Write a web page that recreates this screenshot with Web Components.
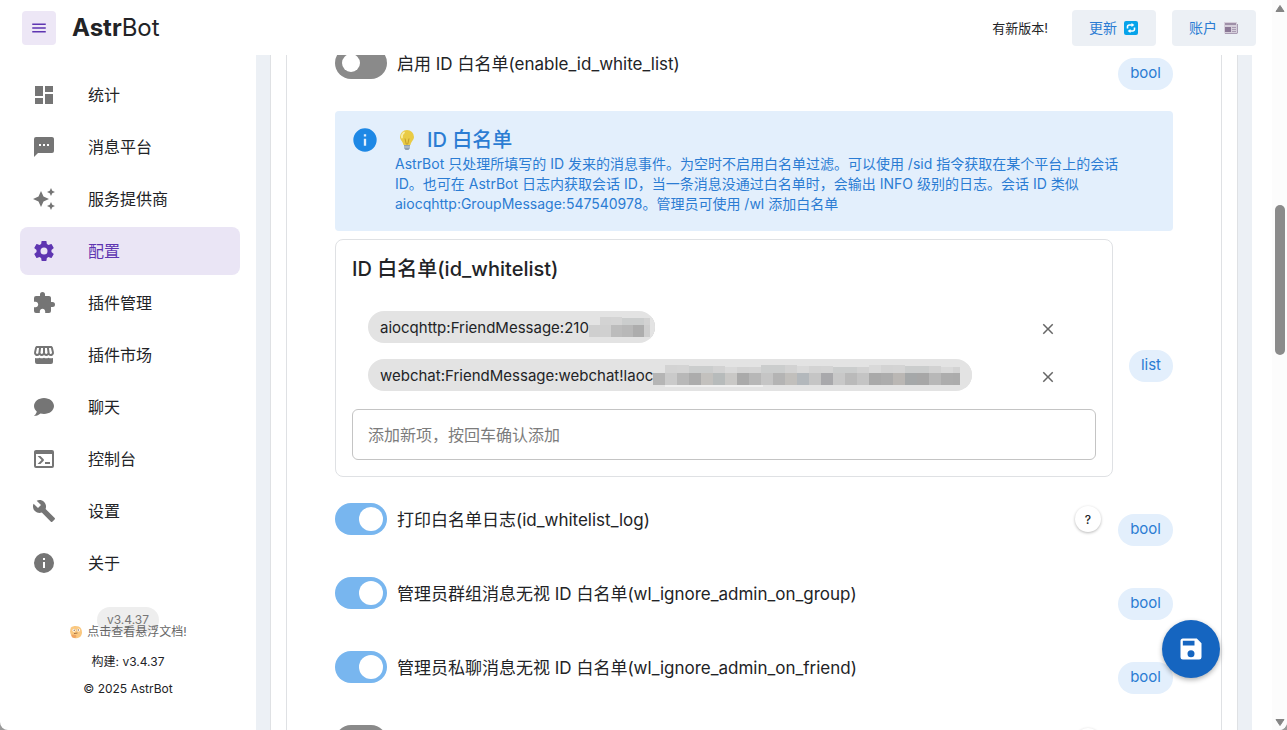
<!DOCTYPE html>
<html lang="zh-CN">
<head>
<meta charset="utf-8">
<meta name="viewport" content="width=device-width, initial-scale=1">
<title>AstrBot</title>
<style>
  :root {
    --ab-text: #222326;
    --ab-icon: #757575;
    --ab-purple: #5e35b1;
    --ab-purple-soft: #eae5f5;
    --ab-blue: #1e88e5;
    --ab-blue-text: #2b7cd3;
    --ab-blue-soft: #e3effc;
    --ab-surface: #ecf0f5;
    --ab-line: #dfe1e4;
  }
  html { background: #9a9a9a; }
  body {
    margin: 0;
    color: var(--ab-text);
    font-family: Inter, "Noto Sans CJK SC", sans-serif;
    font-size: 16px;
  }
</style>
</head>
<body>
<ab-app>
  <ab-header slot="header"></ab-header>

  <ab-sidebar slot="sidebar">
    <ab-nav-item icon="dashboard">统计</ab-nav-item>
    <ab-nav-item icon="message">消息平台</ab-nav-item>
    <ab-nav-item icon="creation">服务提供商</ab-nav-item>
    <ab-nav-item icon="cog" active>配置</ab-nav-item>
    <ab-nav-item icon="puzzle">插件管理</ab-nav-item>
    <ab-nav-item icon="store">插件市场</ab-nav-item>
    <ab-nav-item icon="chat">聊天</ab-nav-item>
    <ab-nav-item icon="console">控制台</ab-nav-item>
    <ab-nav-item icon="wrench">设置</ab-nav-item>
    <ab-nav-item icon="info">关于</ab-nav-item>
  </ab-sidebar>

  <ab-switch-row>启用 ID 白名单(enable_id_white_list)</ab-switch-row>
  <ab-tip>
    <span slot="title">ID 白名单</span>
    AstrBot 只处理所填写的 ID 发来的消息事件。为空时不启用白名单过滤。可以使用 /sid 指令获取在某个平台上的会话<br>
    ID。也可在 AstrBot 日志内获取会话 ID，当一条消息没通过白名单时，会输出 INFO 级别的日志。会话 ID 类似<br>
    aiocqhttp:GroupMessage:547540978。管理员可使用 /wl 添加白名单
  </ab-tip>
  <ab-list-editor>
    <span slot="title">ID 白名单(id_whitelist)</span>
    <ab-list-item>aiocqhttp:FriendMessage:210<ab-mosaic slot="mask" size="short"></ab-mosaic></ab-list-item>
    <ab-list-item>webchat:FriendMessage:webchat!laoc<ab-mosaic slot="mask" size="long"></ab-mosaic></ab-list-item>
  </ab-list-editor>
  <ab-switch-row checked help>打印白名单日志(id_whitelist_log)</ab-switch-row>
  <ab-switch-row checked>管理员群组消息无视 ID 白名单(wl_ignore_admin_on_group)</ab-switch-row>
  <ab-switch-row checked>管理员私聊消息无视 ID 白名单(wl_ignore_admin_on_friend)</ab-switch-row>
  <ab-switch-row help></ab-switch-row>

  <ab-save-button slot="fab"></ab-save-button>
</ab-app>

<script>
const ICONS = {
  menu: 'M3,6H21V8H3V6M3,11H21V13H3V11M3,16H21V18H3V16Z',
  dashboard: 'M13,3V9H21V3M13,21H21V11H13M3,21H11V15H3M3,13H11V3H3V13Z',
  message: 'M17,11H15V9H17M13,11H11V9H13M9,11H7V9H9M20,2H4A2,2 0 0,0 2,4V22L6,18H20A2,2 0 0,0 22,16V4C22,2.89 21.1,2 20,2Z',
  creation: 'M19,1L17.74,3.75L15,5L17.74,6.26L19,9L20.25,6.26L23,5L20.25,3.75M9,4L6.5,9.5L1,12L6.5,14.5L9,20L11.5,14.5L17,12L11.5,9.5M19,15L17.74,17.74L15,19L17.74,20.25L19,23L20.25,20.25L23,19L20.25,17.74',
  cog: 'M12,15.5A3.5,3.5 0 0,1 8.5,12A3.5,3.5 0 0,1 12,8.5A3.5,3.5 0 0,1 15.5,12A3.5,3.5 0 0,1 12,15.5M19.43,12.97C19.47,12.65 19.5,12.33 19.5,12C19.5,11.67 19.47,11.34 19.43,11L21.54,9.37C21.73,9.22 21.78,8.95 21.66,8.73L19.66,5.27C19.54,5.05 19.27,4.96 19.05,5.05L16.56,6.05C16.04,5.66 15.5,5.32 14.87,5.07L14.5,2.42C14.46,2.18 14.25,2 14,2H10C9.75,2 9.54,2.18 9.5,2.42L9.13,5.07C8.5,5.32 7.96,5.66 7.44,6.05L4.95,5.05C4.73,4.96 4.46,5.05 4.34,5.27L2.34,8.73C2.21,8.95 2.27,9.22 2.46,9.37L4.57,11C4.53,11.34 4.5,11.67 4.5,12C4.5,12.33 4.53,12.65 4.57,12.97L2.46,14.63C2.27,14.78 2.21,15.05 2.34,15.27L4.34,18.73C4.46,18.95 4.73,19.03 4.95,18.95L7.44,17.94C7.96,18.34 8.5,18.68 9.13,18.93L9.5,21.58C9.54,21.82 9.75,22 10,22H14C14.25,22 14.46,21.82 14.5,21.58L14.87,18.93C15.5,18.67 16.04,18.34 16.56,17.94L19.05,18.95C19.27,19.03 19.54,18.95 19.66,18.73L21.66,15.27C21.78,15.05 21.73,14.78 21.54,14.63L19.43,12.97Z',
  puzzle: 'M20.5,11H19V7C19,5.89 18.1,5 17,5H13V3.5A2.5,2.5 0 0,0 10.5,1A2.5,2.5 0 0,0 8,3.5V5H4A2,2 0 0,0 2,7V10.8H3.5C5,10.8 6.2,12 6.2,13.5C6.2,15 5,16.2 3.5,16.2H2V20A2,2 0 0,0 4,22H7.8V20.5C7.8,19 9,17.8 10.5,17.8C12,17.8 13.2,19 13.2,20.5V22H17A2,2 0 0,0 19,20V16H20.5A2.5,2.5 0 0,0 23,13.5A2.5,2.5 0 0,0 20.5,11Z',
  store: 'M5.06,3C4.63,3 4.22,3.14 3.84,3.42C3.46,3.7 3.24,4.06 3.14,4.5L2.11,8.91C1.86,10 2.06,10.92 2.69,11.73C3.3,12.5 4.2,13 5.22,13C6.16,13 6.91,12.59 7.47,12.05C8.1,12.67 8.86,13 9.8,13C10.64,13 11.44,12.63 12,12.07C12.68,12.7 13.45,13 14.3,13C15.17,13 15.91,12.67 16.54,12.05C17.11,12.62 17.86,13 18.81,13C19.8,13 20.7,12.5 21.28,11.77C21.94,10.95 22.14,10 21.89,8.91L20.86,4.5C20.73,4.06 20.5,3.7 20.13,3.42C19.77,3.14 19.38,3 18.94,3H5.06M18.89,4.97L19.97,9.38C20.06,9.81 19.97,10.2 19.69,10.55C19.44,10.86 19.13,11 18.75,11C18.44,11 18.17,10.9 17.95,10.66C17.73,10.43 17.61,10.16 17.58,9.84L16.97,5L18.89,4.97M5.06,5H7.03L6.42,9.84C6.3,10.63 5.91,11 5.25,11C4.84,11 4.53,10.86 4.31,10.55C4.03,10.2 3.94,9.81 4.03,9.38L5.06,5M9.05,5H11V9.7C11,10.05 10.89,10.35 10.64,10.62C10.39,10.88 10.08,11 9.7,11C9.36,11 9.07,10.88 8.84,10.59C8.61,10.3 8.5,10 8.5,9.66V9.5L9.05,5M13,5H14.95L15.5,9.5C15.58,9.92 15.5,10.27 15.21,10.57C14.95,10.87 14.61,11 14.2,11C13.89,11 13.61,10.88 13.36,10.62C13.11,10.35 13,10.05 13,9.7V5M3,14.9V19A2,2 0 0,0 5,21H19A2,2 0 0,0 21,19V14.9C20.3,15.2 19.6,15.3 18.8,15.3C18,15.3 17.2,15.1 16.5,14.7C15.2,15.5 13.3,15.5 12,14.7C10.7,15.5 8.8,15.5 7.5,14.7C6.2,15.5 4.4,15.5 3,14.9Z',
  chat: 'M12,3C17.5,3 22,6.58 22,11C22,15.42 17.5,19 12,19C10.76,19 9.57,18.82 8.47,18.5C5.55,21 2,21 2,21C4.33,18.67 4.7,17.1 4.75,16.5C3.05,15.07 2,13.13 2,11C2,6.58 6.5,3 12,3Z',
  console: 'M20,19V7H4V19H20M20,3A2,2 0 0,1 22,5V19A2,2 0 0,1 20,21H4A2,2 0 0,1 2,19V5C2,3.89 2.9,3 4,3H20M13,17V15H18V17H13M9.58,13L5.57,9H8.4L11.7,12.3C12.09,12.69 12.09,13.33 11.7,13.72L8.42,17H5.59L9.58,13Z',
  wrench: 'M22.7,19L13.6,9.9C14.5,7.6 14,4.9 12.1,3C10.1,1 7.1,0.6 4.7,1.7L9,6L6,9L1.6,4.7C0.4,7.1 0.9,10.1 2.9,12.1C4.8,14 7.5,14.5 9.8,13.6L18.9,22.7C19.3,23.1 19.9,23.1 20.3,22.7L22.6,20.4C23.1,20 23.1,19.3 22.7,19Z',
  info: 'M13,9H11V7H13M13,17H11V11H13M12,2A10,10 0 0,0 2,12A10,10 0 0,0 12,22A10,10 0 0,0 22,12A10,10 0 0,0 12,2Z',
  save: 'M15,9H5V5H15M12,19A3,3 0 0,1 9,16A3,3 0 0,1 12,13A3,3 0 0,1 15,16A3,3 0 0,1 12,19M17,3H5C3.89,3 3,3.9 3,5V19A2,2 0 0,0 5,21H19A2,2 0 0,0 21,19V7L17,3Z',
  close: 'M19,6.41L17.59,5L12,10.59L6.41,5L5,6.41L10.59,12L5,17.59L6.41,19L12,13.41L17.59,19L19,17.59L13.41,12L19,6.41Z',
};

const icon = (name, size = 24) =>
  `<svg viewBox="0 0 24 24" width="${size}" height="${size}" fill="currentColor" aria-hidden="true"><path d="${ICONS[name]}"/></svg>`;

// Multi-colour pictograms
const EMOJI = {
  refresh: `<svg viewBox="0 0 16 16" width="16" height="16" aria-hidden="true">
    <rect x="1" y="1" width="14" height="14" rx="2" fill="#06a3ea"/>
    <path d="M4.5 8.5V6.8A1.8 1.8 0 0 1 6.3 5H9M11.5 7.5v1.7A1.8 1.8 0 0 1 9.7 11H7" fill="none" stroke="#fff" stroke-width="1.6"/>
    <path d="M8.5 2.9 11.4 5 8.5 7.1ZM7.5 8.9 4.6 11l2.9 2.1Z" fill="#fff"/></svg>`,
  newspaper: `<svg viewBox="0 0 16 16" width="16" height="16" aria-hidden="true">
    <path d="M1 2h13v2h1v10H3a2 2 0 0 1-2-2Z" fill="#d6cfdb"/>
    <path d="M2 4h11" stroke="#877592" stroke-width="1.4"/>
    <rect x="2" y="7" width="6" height="5" fill="#8b7896"/>
    <path d="M9 7.5h4M9 9.5h4M9 11.5h4M2 13.5h12M14.5 4v9" stroke="#a99cb3"/></svg>`,
  bulb: `<svg viewBox="0 0 24 24" width="24" height="24" aria-hidden="true">
    <path d="M12 2a7 7 0 0 0-7 7c0 3 3 4.500 3.500 8h7C16 13.500 19 12 19 9a7 7 0 0 0-7-7Z" fill="#e9cb45"/>
    <path d="M9 4.500a5 5 0 0 0-2 5" fill="none" stroke="#f8eda2" stroke-width="1.800" stroke-linecap="round"/>
    <path d="M10 10.500 11.200 16h1.600L14 10.500" fill="none" stroke="#c39d28"/>
    <path d="M9 17h6v3l-1.500 2h-3L9 20Z" fill="#8fa0b1"/><path d="M9 19h6" stroke="#c7d0da"/></svg>`,
  face: `<svg viewBox="0 0 14 14" width="14" height="14" aria-hidden="true">
    <path d="M2 2.500C4 .6 10 .2 12 3.500s1.300 9-4.500 9.800C2 13.500-.3 7 2 2.500Z" fill="#fac880"/>
    <circle cx="5" cy="5.200" r="1.500" fill="#fff"/><circle cx="9.500" cy="5" r="1.500" fill="#fff"/>
    <circle cx="5.200" cy="5.200" r=".7" fill="#86633f"/><circle cx="9.300" cy="5" r=".7" fill="#86633f"/>
    <path d="M5 8.600 8.500 8" stroke="#a87545"/><path d="M2.500 9.500 6.500 10c1.500.3 1 3-1 3S2 12 2.500 9.500Z" fill="#f0a562"/></svg>`,
};

class AbElement extends HTMLElement {
  constructor() {
    super();
    this.attachShadow({ mode: 'open' });
  }
  connectedCallback() {
    this.shadowRoot.innerHTML = `<style>* { box-sizing: border-box; } svg { display: block; flex: none; } ${this.css()}</style>${this.html()}`;
  }
}

class AbApp extends AbElement {
  css() {
    return `
      :host {
        position: relative;
        display: grid;
        grid-template-columns: minmax(0, 1fr) 15px;
        height: 100vh;
        overflow: hidden;
        background: #fff;
        border-radius: 0 0 8px 8px;
      }
      .page { display: flex; flex-direction: column; min-height: 0; }
      .body { display: flex; flex: 1; min-height: 0; }
      .surface {
        display: flex;
        flex: 1;
        min-width: 0;
        margin-right: 20px;
        padding: 0 14px;
        background: var(--ab-surface);
        overflow: hidden;
      }
      .panel {
        flex: 1;
        min-width: 0;
        padding: 0 15px;
        background: #fff;
        border: solid var(--ab-line);
        border-width: 0 1px;
      }
      main {
        display: flex;
        flex-direction: column;
        margin-top: -29px;
        padding: 0 48px;
        border: solid var(--ab-line);
        border-width: 0 1px;
      }`;
  }
  html() {
    return `
      <div class="page">
        <slot name="header"></slot>
        <div class="body">
          <slot name="sidebar"></slot>
          <div class="surface"><div class="panel"><main><slot></slot></main></div></div>
        </div>
      </div>
      <ab-scroll-rail></ab-scroll-rail>
      <slot name="fab"></slot>`;
  }
}

class AbScrollRail extends AbElement {
  css() {
    return `
      :host {
        display: flex;
        flex-direction: column;
        align-items: center;
        padding: 4px 0 3px;
        background: #fcfcfc;
        color: #858585;
      }
      .track { flex: 1; padding-top: 192px; }
      .thumb { width: 10px; height: 150px; border-radius: 5px; background: #8b8b8b; }`;
  }
  html() {
    return `
      <svg width="10" height="9" viewBox="0 0 10 9" fill="currentColor"><path d="M5 1.500 9 7.500H1Z" stroke="currentColor" stroke-linejoin="round"/></svg>
      <div class="track"><div class="thumb"></div></div>
      <svg width="10" height="9" viewBox="0 0 10 9" fill="currentColor"><path d="M5 7.500 9 1.500H1Z" stroke="currentColor" stroke-linejoin="round"/></svg>`;
  }
}

class AbHeader extends AbElement {
  css() {
    return `
      :host {
        display: flex;
        align-items: center;
        flex: none;
        height: 55px;
        padding: 0 16px 0 22px;
        background: #fff;
      }
      button { border: 0; font: inherit; cursor: pointer; }
      .menu {
        display: grid;
        place-items: center;
        width: 34px;
        height: 34px;
        padding: 0;
        border-radius: 4px;
        background: #ede7f6;
        color: var(--ab-purple);
      }
      .logo {
        flex: 1;
        margin-left: 16px;
        color: inherit;
        font-size: 24px;
        text-decoration: none;
      }
      .notice { font-size: 13px; }
      .action {
        display: flex;
        align-items: center;
        justify-content: center;
        gap: 6px;
        min-width: 84px;
        height: 36px;
        padding: 0 16px;
        border-radius: 4px;
        background: var(--ab-surface);
        color: var(--ab-blue-text);
        font-size: 14px;
      }
      .action span { padding-bottom: 2px; }
      .actions { display: flex; gap: 16px; margin-left: 24px; }`;
  }
  html() {
    return `
      <button class="menu" aria-label="菜单">${icon('menu', 18)}</button>
      <a class="logo" href="#"><b>Astr</b>Bot</a>
      <span class="notice">有新版本!</span>
      <div class="actions">
        <button class="action"><span>更新</span>${EMOJI.refresh}</button>
        <button class="action"><span>账户</span>${EMOJI.newspaper}</button>
      </div>`;
  }
}

class AbSidebar extends AbElement {
  css() {
    return `
      :host { display: block; flex: none; width: 256px; padding: 16px 16px 0 20px; box-sizing: border-box; }
      nav { display: flex; flex-direction: column; gap: 4px; }
      footer {
        display: flex;
        flex-direction: column;
        align-items: center;
        padding: 20px 4px 0 0;
        font-size: 12px;
        line-height: 27px;
      }
      .version {
        height: 26px;
        margin-bottom: -9px;
        padding: 0 10px;
        border-radius: 13px;
        background: #eee;
        color: #777;
        line-height: 26px;
      }
      .docs {
        display: flex;
        align-items: center;
        gap: 4px;
        margin-bottom: 8px;
        color: #666;
        line-height: 16px;
        text-decoration: none;
      }`;
  }
  html() {
    return `
      <nav><slot></slot></nav>
      <footer>
        <span class="version">v3.4.37</span>
        <a class="docs" href="#">${EMOJI.face} 点击查看悬浮文档!</a>
        <span>构建: v3.4.37</span>
        <span>© 2025 AstrBot</span>
      </footer>`;
  }
}

class AbNavItem extends AbElement {
  css() {
    return `
      :host { display: block; }
      a {
        display: flex;
        align-items: center;
        gap: 32px;
        height: 48px;
        padding: 0 12px;
        border-radius: 8px;
        color: inherit;
        text-decoration: none;
      }
      span { padding-bottom: 3px; }
      svg { color: var(--ab-icon); }
      :host([active]) a { background: var(--ab-purple-soft); color: var(--ab-purple); }
      :host([active]) svg { color: inherit; }`;
  }
  html() {
    const current = this.hasAttribute('active') ? 'aria-current="page"' : '';
    return `<a href="#" ${current}>${icon(this.getAttribute('icon'))}<span><slot></slot></span></a>`;
  }
}

class AbTypeChip extends AbElement {
  css() {
    return `
      :host {
        display: inline-block;
        padding: 0 12px 2px;
        border-radius: 16px;
        background: var(--ab-blue-soft);
        color: var(--ab-blue-text);
        font-size: 15px;
        line-height: 30px;
      }`;
  }
  html() {
    return '<slot></slot>';
  }
}

class AbSwitchRow extends AbElement {
  css() {
    return `
      :host {
        display: grid;
        grid-template-columns: minmax(0, 1fr) auto 60px;
        align-items: center;
        column-gap: 12px;
        height: 74px;
      }
      .field { display: flex; align-items: center; gap: 10px; }
      label { padding-bottom: 2px; font-size: 17px; }
      input {
        appearance: none;
        display: flex;
        align-items: center;
        flex: none;
        width: 52px;
        height: 32px;
        margin: 0;
        padding: 0 7px;
        border-radius: 16px;
        background: #8a8a8a;
      }
      input::before {
        content: '';
        width: 18px;
        height: 18px;
        border-radius: 50%;
        background: #fff;
      }
      input:checked { justify-content: flex-end; padding: 0 4px; background: #78b6ef; }
      input:checked::before { width: 24px; height: 24px; }
      .help {
        width: 26px;
        height: 26px;
        padding: 0;
        border: 0;
        border-radius: 50%;
        background: #fff;
        box-shadow: 0 1px 3px rgba(0, 0, 0, .28);
        color: inherit;
        font: inherit;
        font-size: 12px;
        font-weight: 500;
      }
      ab-type-chip { grid-column: 3; justify-self: end; margin-top: 22px; }`;
  }
  html() {
    return `
      <div class="field">
        <input type="checkbox" id="toggle" ${this.hasAttribute('checked') ? 'checked' : ''}>
        <label for="toggle"><slot></slot></label>
      </div>
      ${this.hasAttribute('help') ? '<button class="help">?</button>' : ''}
      <ab-type-chip>bool</ab-type-chip>`;
  }
}

class AbTip extends AbElement {
  css() {
    return `
      :host {
        display: flex;
        gap: 16px;
        margin-top: 11px;
        padding: 15px 16px 17px;
        border-radius: 4px;
        background: var(--ab-blue-soft);
        color: var(--ab-blue-text);
      }
      .icon { color: var(--ab-blue); }
      h3 {
        display: flex;
        align-items: center;
        gap: 8px;
        margin: 0;
        font-size: 20px;
        font-weight: 500;
        line-height: 28px;
      }
      p { margin: 0; font-size: 14px; line-height: 20px; }`;
  }
  html() {
    return `
      <div class="icon">${icon('info', 28)}</div>
      <div>
        <h3>${EMOJI.bulb}<slot name="title"></slot></h3>
        <p><slot></slot></p>
      </div>`;
  }
}

class AbListEditor extends AbElement {
  css() {
    return `
      :host {
        display: grid;
        grid-template-columns: minmax(0, 1fr) 60px;
        align-items: center;
        margin: 8px 0 5px;
      }
      section { padding: 16px; border: 1px solid var(--ab-line); border-radius: 8px; }
      h3 { margin: 0 0 21px; font-size: 20px; font-weight: 500; line-height: 26px; }
      .items { padding: 0 16px; }
      input {
        display: block;
        width: 100%;
        height: 51px;
        margin-top: 10px;
        padding: 0 15px;
        border: 1px solid #c4c4c4;
        border-radius: 6px;
        background: #fff;
        color: inherit;
        font: inherit;
      }
      input::placeholder { color: #7c7c7c; opacity: 1; }
      ab-type-chip { justify-self: end; margin-top: 16px; }`;
  }
  html() {
    return `
      <section>
        <h3><slot name="title"></slot></h3>
        <div class="items"><slot></slot></div>
        <input type="text" aria-label="添加新项" placeholder="添加新项，按回车确认添加">
      </section>
      <ab-type-chip>list</ab-type-chip>`;
  }
}

class AbListItem extends AbElement {
  css() {
    return `
      :host { display: flex; align-items: center; justify-content: space-between; height: 48px; }
      .chip {
        display: flex;
        align-items: center;
        height: 32px;
        padding-left: 12px;
        border-radius: 16px;
        background: #e3e3e3;
        font-size: 15px;
        overflow: hidden;
      }
      button {
        display: grid;
        place-items: center;
        width: 32px;
        height: 32px;
        margin: 4px 16px 0 0;
        padding: 0;
        border: 0;
        background: none;
        color: #666;
      }`;
  }
  html() {
    return `
      <div class="chip"><slot></slot><slot name="mask"></slot></div>
      <button aria-label="删除">${icon('close', 18)}</button>`;
  }
}

// Pixelated cover over the private part of a session id
class AbMosaic extends AbElement {
  css() {
    return ':host { display: block; flex: none; margin-top: 2px; }';
  }
  html() {
    const long = this.getAttribute('size') === 'long';
    const tones = long
      ? ['#b5b5b5', '#cacaca', '#b8b8b8', '#acacac', '#c3c1be', '#b7bbbb', '#c9c8c6', '#aaa', '#b7b7b7', '#c5c5c5',
        '#b4b4b4', '#c1bfbc', '#b3b8bc', '#c5c5c5', '#a9a9ac', '#c8c8c8', '#bababa', '#c4c4c4', '#a9a9a9', '#acacac',
        '#bab7b4', '#a5a8a9', '#a7a7a7', '#b8b8b8', '#adadad', '#acacac']
      : ['#cfcfcf', '#d0d0d0', '#bcbcbc', '#b8b8b8', '#adadad', '#cecece'];
    const pale = ['#d9d9d9', '#d3d3d3', '#d4d4d4', '#cbcdcd', '#cbcdcd', '#d2d2d2'];
    const step = long ? 12 : 11;
    const width = tones.length * step;
    const total = width + (long ? 7 : 0);
    const cells = tones.map((tone, i) => `
      <rect x="${i * step}" y="${i ? 1 + Math.floor(i / 3) % 3 : 9}" width="${step}" height="9" fill="${pale[i % 6]}"/>
      <rect x="${i * step}" y="9" width="${step}" height="12" fill="${tone}"/>`).join('');
    const under = long ? `<path d="M12 22H110" stroke="#efefef" stroke-width="2"/>` : '';
    return `<svg width="${total}" height="24" viewBox="0 0 ${total} 24" aria-hidden="true" shape-rendering="crispEdges">
      ${cells}${under}<rect x="${width - 5}" width="12" height="24" fill="#e3e3e3"/></svg>`;
  }
}

class AbSaveButton extends AbElement {
  css() {
    return `
      :host { position: absolute; right: 67px; bottom: 52px; }
      button {
        display: grid;
        place-items: center;
        width: 58px;
        height: 58px;
        padding: 0;
        border: 0;
        border-radius: 50%;
        background: #1565c0;
        box-shadow: 0 2px 5px rgba(0, 0, 0, .3);
        color: #fff;
      }`;
  }
  html() {
    return `<button aria-label="保存">${icon('save', 28)}</button>`;
  }
}

customElements.define('ab-scroll-rail', AbScrollRail);
customElements.define('ab-type-chip', AbTypeChip);
customElements.define('ab-mosaic', AbMosaic);
customElements.define('ab-header', AbHeader);
customElements.define('ab-sidebar', AbSidebar);
customElements.define('ab-nav-item', AbNavItem);
customElements.define('ab-switch-row', AbSwitchRow);
customElements.define('ab-tip', AbTip);
customElements.define('ab-list-item', AbListItem);
customElements.define('ab-list-editor', AbListEditor);
customElements.define('ab-save-button', AbSaveButton);
customElements.define('ab-app', AbApp);
</script>
</body>
</html>
